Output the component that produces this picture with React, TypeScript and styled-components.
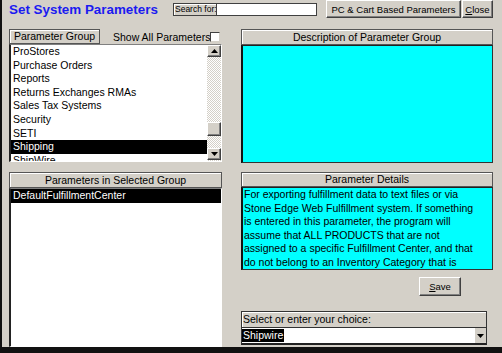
import React from "react";
import styled, { createGlobalStyle } from "styled-components";

const Global = createGlobalStyle`
  html, body { margin: 0; padding: 0; background: #d4d0c8; }
  * { box-sizing: border-box; }
`;

const Frame = styled.div`
  width: 502px;
  height: 353px;
  overflow: hidden;
  background: #d4d0c8;
  border-left: 2px solid #111;
  border-bottom: 6px solid #111;
  padding: 0 9px 0 7px;
  font-family: "Liberation Sans", Arial, sans-serif;
  font-size: 10.5px;
  color: #000;
  display: flex;
  flex-direction: column;
`;

const TopBar = styled.div`
  height: 19px;
  display: flex;
  align-items: flex-start;
`;

const Title = styled.div`
  font-weight: bold;
  font-size: 13.4px;
  color: #1b1bf0;
  line-height: 15px;
  padding-top: 2px;
  width: 164px;
  white-space: nowrap;
`;

const SearchGroup = styled.div`
  display: flex;
  margin-top: 3px;
  height: 13px;
`;

const SearchLabel = styled.div`
  width: 44px;
  height: 13px;
  border: 1px solid #404040;
  box-shadow: inset 1px 1px #fff;
  font-size: 8.5px;
  line-height: 11px;
  padding-left: 1px;
  white-space: nowrap;
  overflow: hidden;
`;

const SearchInput = styled.div`
  width: 100px;
  height: 13px;
  background: #fff;
  border: 1px solid #404040;
  border-left: none;
`;

const Button = styled.div<{ $w: number; $h?: number }>`
  width: ${(p) => p.$w}px;
  height: ${(p) => p.$h ?? 18}px;
  background: #d4d0c8;
  border-top: 1px solid #fff;
  border-left: 1px solid #fff;
  border-right: 1px solid #404040;
  border-bottom: 1px solid #404040;
  box-shadow: inset -1px -1px #808080;
  display: flex;
  align-items: center;
  justify-content: center;
  font-size: 9.5px;
  white-space: nowrap;
`;

const TopButtons = styled.div`
  display: flex;
  gap: 1px;
  margin-left: 9px;
`;

const Main = styled.div`
  flex: 1;
  display: grid;
  grid-template-columns: 213px 252px;
  column-gap: 19px;
  margin-top: 10px;
  min-height: 0;
`;

const Column = styled.div`
  display: flex;
  flex-direction: column;
  min-height: 0;
`;

const Header = styled.div<{ $w?: number; $h?: number }>`
  width: ${(p) => (p.$w ? `${p.$w}px` : "100%")};
  height: ${(p) => p.$h ?? 16}px;
  border: 1px solid #555;
  box-shadow: inset 1px 1px #fff;
  background: #d4d0c8;
  text-align: center;
  line-height: ${(p) => (p.$h ?? 16) - 2}px;
  white-space: nowrap;
  flex-shrink: 0;
`;

const GroupRow = styled.div`
  display: flex;
  align-items: center;
  height: 15px;
`;

const ShowAll = styled.div`
  margin-left: 13px;
  display: flex;
  align-items: center;
  white-space: nowrap;
`;

const Check = styled.span`
  display: inline-block;
  width: 10px;
  height: 10px;
  background: #fff;
  border-top: 1px solid #404040;
  border-left: 1px solid #404040;
  border-right: 1px solid #d4d0c8;
  border-bottom: 1px solid #d4d0c8;
`;

const ListBox = styled.div<{ $h?: number; $grow?: boolean }>`
  background: #fff;
  height: ${(p) => (p.$h ? `${p.$h}px` : "auto")};
  flex: ${(p) => (p.$grow ? 1 : "none")};
  border-top: 1px solid #808080;
  border-left: 2px solid #222;
  border-right: 1px solid #fff;
  border-bottom: 1px solid #fff;
  display: flex;
  overflow: hidden;
`;

const Items = styled.div`
  flex: 1;
  overflow: hidden;
`;

const Item = styled.div<{ $sel?: boolean }>`
  height: 13.6px;
  line-height: 13.6px;
  padding-left: 2px;
  white-space: nowrap;
  background: ${(p) => (p.$sel ? "#000" : "transparent")};
  color: ${(p) => (p.$sel ? "#fff" : "#000")};
`;

const ScrollBar = styled.div`
  width: 14px;
  display: flex;
  flex-direction: column;
  background-color: #ecebe6;
  background-image: repeating-conic-gradient(#fff 0 25%, #d4d0c8 0 50%);
  background-size: 2px 2px;
`;

const SBtn = styled.div<{ $h?: number }>`
  height: ${(p) => p.$h ?? 13}px;
  background: #d4d0c8;
  border-top: 1px solid #fff;
  border-left: 1px solid #fff;
  border-right: 1px solid #404040;
  border-bottom: 1px solid #404040;
  box-shadow: inset -1px -1px #808080;
  display: flex;
  align-items: center;
  justify-content: center;
`;

const Spacer = styled.div<{ $h: number }>`
  height: ${(p) => p.$h}px;
  flex-shrink: 0;
`;

const Cyan = styled.div<{ $h: number }>`
  height: ${(p) => p.$h}px;
  background: #00ffff;
  border-top: 1px solid #222;
  border-left: 2px solid #111;
  border-right: 1px solid #333;
  border-bottom: 1px solid #333;
  padding: 0 1px;
  line-height: 13.5px;
  white-space: pre-line;
  overflow: hidden;
  flex-shrink: 0;
`;

const SaveRow = styled.div`
  display: flex;
  justify-content: flex-end;
  padding-right: 32px;
`;

const SelectBlock = styled.div`
  width: 246px;
  display: flex;
  flex-direction: column;
`;

const SelectLabel = styled.div`
  height: 17px;
  border: 1px solid #333;
  box-shadow: inset 1px 1px #fff;
  padding-left: 1px;
  line-height: 15px;
  font-size: 10.5px;
`;

const Combo = styled.div`
  height: 17px;
  background: #fff;
  border-left: 1px solid #333;
  border-right: 1px solid #333;
  border-bottom: 2px solid #222;
  display: flex;
  align-items: center;
  justify-content: space-between;
`;

const ComboSel = styled.span`
  background: #000;
  color: #fff;
  line-height: 13px;
  padding: 0 1px;
`;

const DropBtn = styled.div`
  width: 12px;
  height: 15px;
  background: #d4d0c8;
  display: flex;
  align-items: center;
  justify-content: center;
  border-left: 1px solid #fff;
`;

const Tri = ({ up }: { up?: boolean }) => (
  <svg width="7" height="4" viewBox="0 0 7 4">
    {up ? <polygon points="3.5,0 7,4 0,4" fill="#000" /> : <polygon points="0,0 7,0 3.5,4" fill="#000" />}
  </svg>
);

const groups = [
  "ProStores",
  "Purchase Orders",
  "Reports",
  "Returns Exchanges RMAs",
  "Sales Tax Systems",
  "Security",
  "SETI",
  "Shipping",
  "ShipWire",
];

const details =
  "For exporting fulfillment data to text files or via\nStone Edge Web Fulfillment system. If something\nis entered in this parameter, the program will\nassume that ALL PRODUCTS that are not\nassigned to a specific Fulfillment Center, and that\ndo not belong to an Inventory Category that is";

export default function App() {
  return (
    <>
      <Global />
      <Frame>
        <TopBar>
          <Title>Set System Parameters</Title>
          <SearchGroup>
            <SearchLabel>Search for:</SearchLabel>
            <SearchInput />
          </SearchGroup>
          <TopButtons>
            <Button $w={135}>PC &amp; Cart Based Parameters</Button>
            <Button $w={31}>
              <u>C</u>lose
            </Button>
          </TopButtons>
        </TopBar>
        <Main>
          <Column>
            <GroupRow>
              <Header $w={91} $h={15}>Parameter Group</Header>
              <ShowAll>
                Show All Parameters
                <Check />
              </ShowAll>
            </GroupRow>
            <ListBox $h={118}>
              <Items>
                {groups.map((g) => (
                  <Item key={g} $sel={g === "Shipping"}>
                    {g}
                  </Item>
                ))}
              </Items>
              <ScrollBar>
                <SBtn $h={12}>
                  <Tri up />
                </SBtn>
                <Spacer $h={65} />
                <SBtn $h={14} />
                <Spacer $h={12} />
                <SBtn $h={12}>
                  <Tri />
                </SBtn>
              </ScrollBar>
            </ListBox>
            <Spacer $h={10} />
            <Header $h={16}>Parameters in Selected Group</Header>
            <ListBox $grow>
              <Items>
                <Item $sel>DefaultFulfillmentCenter</Item>
              </Items>
            </ListBox>
          </Column>
          <Column>
            <Header $h={16}>Description of Parameter Group</Header>
            <Cyan $h={118} />
            <Spacer $h={9} />
            <Header $h={15}>Parameter Details</Header>
            <Cyan $h={83}>{details}</Cyan>
            <Spacer $h={7} />
            <SaveRow>
              <Button $w={42} $h={19}>
                <u>S</u>ave
              </Button>
            </SaveRow>
            <Spacer $h={15} />
            <SelectBlock>
              <SelectLabel>Select or enter your choice:</SelectLabel>
              <Combo>
                <ComboSel>Shipwire</ComboSel>
                <DropBtn>
                  <Tri />
                </DropBtn>
              </Combo>
            </SelectBlock>
          </Column>
        </Main>
      </Frame>
    </>
  );
}
